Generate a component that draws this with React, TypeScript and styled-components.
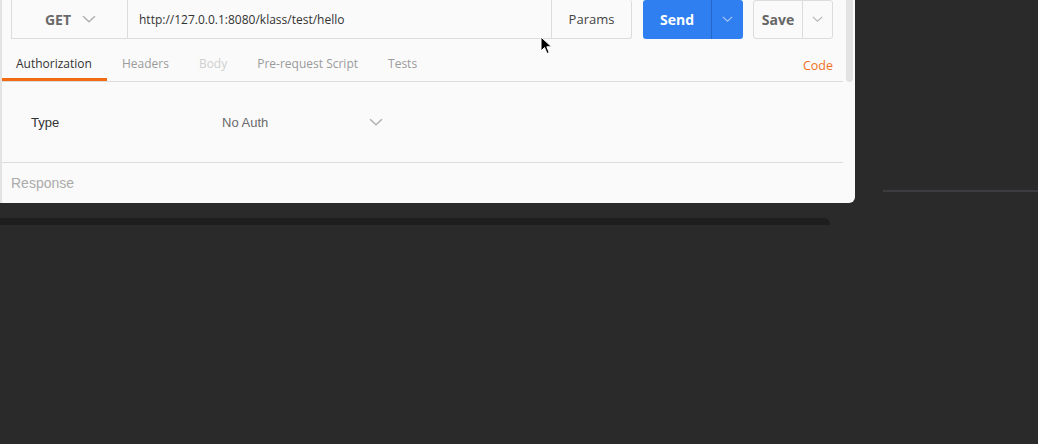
import React from "react";
import styled, { createGlobalStyle } from "styled-components";

const GlobalStyle = createGlobalStyle`
  html, body {
    margin: 0;
    padding: 0;
    background: #2a2a2a;
    overflow: hidden;
  }
  * { box-sizing: border-box; }
`;

const Page = styled.div`
  position: relative;
  width: 1038px;
  height: 444px;
  background: #2a2a2a;
  font-family: "Open Sans", "Liberation Sans", sans-serif;
`;

const Top = styled.div`
  display: flex;
  align-items: flex-start;
`;

const Window = styled.div`
  display: flex;
  width: 855px;
  height: 203px;
  background: #fafafa;
  border-left: 2px solid #e3e3e3;
  border-bottom-right-radius: 6px;
  overflow: hidden;
`;

const Main = styled.div`
  flex: 0 0 841px;
  display: flex;
  flex-direction: column;
`;

const ScrollTrack = styled.div`
  flex: 1;
  padding-left: 3px;
`;

const ScrollThumb = styled.div`
  width: 7px;
  height: 82px;
  background: #e3e3e3;
  border-radius: 0 0 4px 4px;
`;

const RequestBar = styled.div`
  display: flex;
  height: 39px;
  padding-left: 9px;
`;

const MethodBox = styled.div`
  width: 116px;
  display: flex;
  align-items: center;
  justify-content: center;
  gap: 11px;
  border: 1px solid #dcdcdc;
  border-top: none;
  border-right: none;
  padding-left: 2px;
  font-weight: 700;
  font-size: 14px;
  color: #6a6a6a;
`;

const UrlBox = styled.div`
  width: 425px;
  display: flex;
  align-items: center;
  padding-left: 11px;
  border: 1px solid #dcdcdc;
  border-top: none;
  font-size: 12px;
  color: #333;
`;

const ParamsButton = styled.div`
  width: 80px;
  display: flex;
  align-items: center;
  justify-content: center;
  border: 1px solid #dcdcdc;
  border-left: none;
  border-top: none;
  border-radius: 0 3px 3px 0;
  font-size: 13px;
  color: #444;
`;

const SplitButton = styled.div<{ $primary?: boolean; $w: number; $split: number }>`
  display: flex;
  width: ${(p) => p.$w}px;
  margin-left: ${(p) => (p.$primary ? 11 : 10)}px;
  border-radius: 3px;
  background: ${(p) => (p.$primary ? "#2f7ff0" : "#fafafa")};
  border: ${(p) => (p.$primary ? "none" : "1px solid #dcdcdc")};
  > span:first-child {
    width: ${(p) => p.$split}px;
    border-right: 1px solid ${(p) => (p.$primary ? "#2466c9" : "#dcdcdc")};
  }
`;

const ButtonLabel = styled.span<{ $primary?: boolean }>`
  display: flex;
  align-items: center;
  justify-content: center;
  font-weight: 700;
  font-size: 14px;
  color: ${(p) => (p.$primary ? "#fff" : "#666")};
`;

const ButtonCaret = styled.span`
  flex: 1;
  display: flex;
  align-items: center;
  justify-content: center;
  padding-bottom: 2px;
`;

const TabBar = styled.div`
  display: flex;
  align-items: stretch;
  height: 43px;
  padding-top: 9px;
  border-bottom: 1px solid #dcdcdc;
`;

const Tab = styled.div<{ $active?: boolean; $disabled?: boolean }>`
  display: flex;
  align-items: center;
  padding: 0 15px;
  font-size: 12px;
  color: ${(p) => (p.$active ? "#333" : p.$disabled ? "#cfcfcf" : "#9a9a9a")};
  border-bottom: 3px solid ${(p) => (p.$active ? "#f26b10" : "transparent")};
  margin-left: ${(p) => (p.$active ? "-1px" : "0")};
`;

const CodeLink = styled.div`
  margin-left: auto;
  display: flex;
  align-items: center;
  padding: 1px 10px 0 0;
  font-size: 12.5px;
  color: #f0701c;
`;

const AuthRow = styled.div`
  display: flex;
  align-items: center;
  height: 81px;
  border-bottom: 1px solid #dcdcdc;
  font-family: "Liberation Sans", Arial, sans-serif;
  font-size: 13px;
`;

const FieldLabel = styled.div`
  width: 220px;
  padding-left: 29px;
  color: #333;
`;

const Select = styled.div`
  width: 161px;
  display: flex;
  align-items: center;
  justify-content: space-between;
  color: #6a6a6a;
`;

const ResponseRow = styled.div`
  height: 40px;
  display: flex;
  align-items: center;
  padding-left: 9px;
  font-family: "Liberation Sans", Arial, sans-serif;
  font-size: 14px;
  color: #ababab;
`;

const RightPane = styled.div`
  flex: 1;
  padding: 190px 0 0 28px;
`;

const Rule = styled.div`
  height: 2px;
  background: #3b3d40;
`;

const ShadowBand = styled.div`
  width: 830px;
  height: 7px;
  margin-top: 15px;
  background: #1e1e1e;
  border-top-right-radius: 6px;
`;

const Cursor = styled.svg`
  position: absolute;
  left: 540px;
  top: 36px;
`;

const Chevron = ({ color = "#b0b0b0", w = 13 }: { color?: string; w?: number }) => (
  <svg width={w} height={Math.round(w * 0.55)} viewBox="0 0 13 7" fill="none">
    <path d="M1 1 L6.5 6 L12 1" stroke={color} strokeWidth="1.4" />
  </svg>
);

const tabs = [
  { label: "Authorization", active: true },
  { label: "Headers" },
  { label: "Body", disabled: true },
  { label: "Pre-request Script" },
  { label: "Tests" },
];

export default function App() {
  return (
    <Page>
      <GlobalStyle />
      <Top>
        <Window>
          <Main>
            <RequestBar>
              <MethodBox>
                GET <Chevron w={14} />
              </MethodBox>
              <UrlBox>http://127.0.0.1:8080/klass/test/hello</UrlBox>
              <ParamsButton>Params</ParamsButton>
              <SplitButton $primary $w={100} $split={69}>
                <ButtonLabel $primary>Send</ButtonLabel>
                <ButtonCaret>
                  <Chevron color="#a9c6f2" w={11} />
                </ButtonCaret>
              </SplitButton>
              <SplitButton $w={80} $split={49}>
                <ButtonLabel>Save</ButtonLabel>
                <ButtonCaret>
                  <Chevron color="#b5b5b5" w={11} />
                </ButtonCaret>
              </SplitButton>
            </RequestBar>
            <TabBar>
              {tabs.map((t) => (
                <Tab key={t.label} $active={t.active} $disabled={t.disabled}>
                  {t.label}
                </Tab>
              ))}
              <CodeLink>Code</CodeLink>
            </TabBar>
            <AuthRow>
              <FieldLabel>Type</FieldLabel>
              <Select>
                No Auth <Chevron color="#b0b0b0" w={14} />
              </Select>
            </AuthRow>
            <ResponseRow>Response</ResponseRow>
          </Main>
          <ScrollTrack>
            <ScrollThumb />
          </ScrollTrack>
        </Window>
        <RightPane>
          <Rule />
        </RightPane>
      </Top>
      <ShadowBand />
      <Cursor width="13" height="19" viewBox="0 0 13 19">
        <path d="M1 1 L1 15 L4.5 11.5 L7 17.5 L9.2 16.6 L6.8 10.8 L11.5 10.8 Z" fill="#000" stroke="#fff" strokeWidth="1" />
      </Cursor>
    </Page>
  );
}
